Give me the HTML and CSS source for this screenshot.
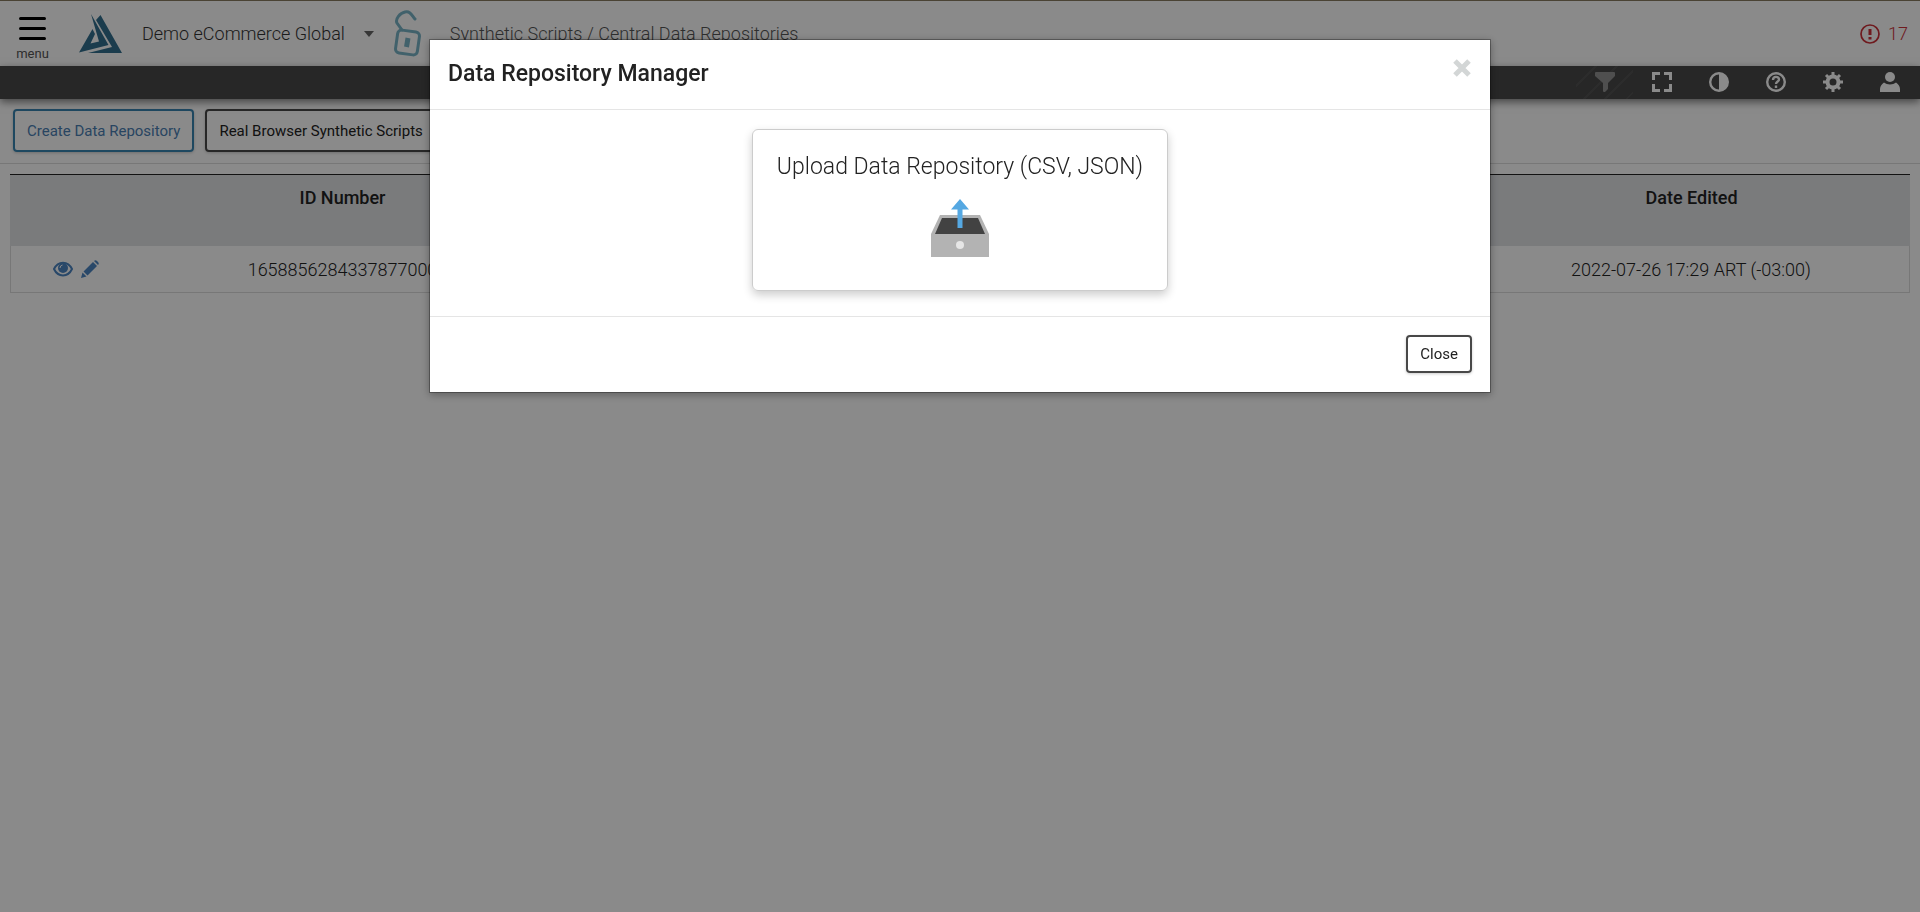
FILE: index.html
```
<!DOCTYPE html>
<html lang="en">
<head>
    <meta charset="UTF-8">
    <meta name="viewport" content="width=device-width, initial-scale=1.0">
    <title>Central Data Repositories</title>
    <link rel="stylesheet" href="styles.css">
</head>
<body>
    <header class="topbar">
        <button type="button" class="menu-btn">
            <svg width="27" height="24" viewBox="0 0 27 24"><path d="M1.500 1.500h24M1.500 11.500h24M1.500 21.500h24" stroke="#000" stroke-width="3" stroke-linecap="round"/></svg>
            <span>menu</span>
        </button>
        <a href="#" class="logo" aria-label="Home">
            <svg width="43" height="40" viewBox="0 0 43 40" fill="#33708f">
                <path d="M12 0L29.500 31 0 38.500 13.500 15 16 20 11.500 29.500 20 27.500z"/>
                <path d="M17 6L21.500 1 43 39H9L33 33z"/>
            </svg>
        </a>
        <button type="button" class="account">
            <span>Demo eCommerce Global</span>
            <i class="caret"></i>
        </button>
        <svg class="lock" width="27" height="48" viewBox="0 0 27 48" fill="none" stroke="#79b3c6" stroke-width="3" stroke-linecap="round">
            <rect x="2.500" y="21" width="22" height="23" rx="4" transform="rotate(8 13.500 32.500)"/>
            <path d="M8 20L3 13C1 9 6 3 11 2C16 1 17 4 21 9"/>
            <path d="M14 28L12.500 37" stroke-width="5" stroke-linecap="butt"/>
        </svg>
        <nav class="breadcrumb">Synthetic Scripts / Central Data Repositories</nav>
        <a href="#" class="alerts">
            <svg width="20" height="20" viewBox="0 0 20 20" fill="none" stroke="#cd3038"><circle cx="10" cy="10" r="9" stroke-width="1.700"/><path d="M10 5v6M10 13v2.500" stroke-width="3"/></svg>
            <span>17</span>
        </a>
    </header>

    <div class="actionbar">
        <button type="button" class="filter" aria-label="Filter">
            <svg width="20" height="20" viewBox="0 0 20 20" fill="#929292"><path d="M1 0h18q1 0 1 1v3l-7 7v6l-3 3H9q-1 0-1-1v-8L0 4V1q0-1 1-1z"/></svg>
        </button>
        <button type="button" aria-label="Full screen">
            <svg width="20" height="20" viewBox="0 0 20 20" fill="none" stroke="#fff" stroke-width="3"><path d="M1.500 8V1.500H8M12 1.500h6.500V8M18.500 12v6.500H12M8 18.500H1.500V12"/></svg>
        </button>
        <button type="button" aria-label="Contrast">
            <svg width="20" height="20" viewBox="0 0 20 20"><circle cx="10" cy="10" r="8.800" fill="none" stroke="#fff" stroke-width="2.400"/><path d="M10 1a9 9 0 0 1 0 18z" fill="#fff"/></svg>
        </button>
        <button type="button" aria-label="Help">
            <svg width="20" height="20" viewBox="0 0 20 20" fill="none" stroke="#fff" stroke-width="2.400"><circle cx="10" cy="10" r="8.800"/><path d="M7 8C7 3.800 13 4 13 7.500C13 9.500 10 9.500 10 12M10 13.500v2.500"/></svg>
        </button>
        <button type="button" aria-label="Settings">
            <svg width="20" height="20" viewBox="0 0 20 20" fill="none" stroke="#fff"><circle cx="10" cy="10" r="5.500" stroke-width="4"/><path d="M10 0v4M10 16v4M0 10h4M16 10h4M3 3l3 3M14 14l3 3M17 3l-3 3M6 14l-3 3" stroke-width="3"/></svg>
        </button>
        <button type="button" aria-label="User">
            <svg width="20" height="20" viewBox="0 0 20 20" fill="#fff"><circle cx="10" cy="5" r="5"/><path d="M0 20v-3c0-3 2-5 4-6.500c3 2.500 9 2.500 12 0c2 1.500 4 3.500 4 6.500v3z"/></svg>
        </button>
    </div>

    <div class="toolbar">
        <button type="button" class="btn btn-primary">Create Data Repository</button>
        <button type="button" class="btn">Real Browser Synthetic Scripts</button>
    </div>

    <main>
        <table class="repositories">
            <thead>
                <tr>
                    <th class="col-actions"></th>
                    <th class="col-id">ID Number</th>
                    <th></th>
                    <th class="col-date">Date Edited</th>
                </tr>
            </thead>
            <tbody>
                <tr>
                    <td>
                        <div class="row-actions">
                            <a href="#" aria-label="View">
                                <svg width="20" height="16" viewBox="0 0 20 16"><path d="M1 8C5-.500 15-.500 19 8C15 16.500 5 16.500 1 8z" fill="none" stroke="#4d86c2" stroke-width="2"/><circle cx="10" cy="7" r="5" fill="#4d86c2"/><path d="M7 7q0-2.500 2.500-3" stroke="#fff" fill="none"/></svg>
                            </a>
                            <a href="#" aria-label="Edit">
                                <svg width="18" height="18" viewBox="0 0 18 18" fill="#4d86c2"><path d="M0 18l1.500-5.500 4 4zM2.500 11.500L12 2l4 4-9.500 9.500zM13 1q1.500-1.500 3 0l1 1q1.500 1.500 0 3z"/></svg>
                            </a>
                        </div>
                    </td>
                    <td>1658856284337877000</td>
                    <td></td>
                    <td>2022-07-26 17:29 ART (-03:00)</td>
                </tr>
            </tbody>
        </table>
    </main>

    <div class="backdrop">
        <div class="modal" role="dialog" aria-labelledby="modalTitle">
            <div class="modal-header">
                <h2 id="modalTitle">Data Repository Manager</h2>
                <button type="button" class="modal-x" aria-label="Close dialog">
                    <svg width="18" height="18" viewBox="0 0 18 18"><path d="M2 2l14 14M16 2L2 16" stroke="#d3d6d6" stroke-width="5"/></svg>
                </button>
            </div>
            <div class="modal-body">
                <button type="button" class="upload-card">
                    <span>Upload Data Repository (CSV, JSON)</span>
                    <svg width="58" height="58" viewBox="0 0 58 58">
                        <path d="M0 35L9 16H49L58 35V58H0z" fill="#b3b3b3"/>
                        <path d="M11 19H47L54 35H4z" fill="#424242"/>
                        <circle cx="29" cy="46" r="4" fill="#e6e6e6"/>
                        <path d="M29 0L38 10.500H31.500V29H26.500V10.500H20z" fill="#55a8e2"/>
                    </svg>
                </button>
            </div>
            <div class="modal-footer">
                <button type="button" class="btn btn-close">Close</button>
            </div>
        </div>
    </div>
</body>
</html>
```
FILE: styles.css
```
* {
    box-sizing: border-box;
}

body {
    margin: 0;
    font-family: Roboto, "Liberation Sans", sans-serif;
    font-size: 18px;
    font-weight: 300;
    color: #222;
    background: #fff;
}

button {
    font: inherit;
    color: inherit;
    background: none;
    border: none;
    padding: 0;
    cursor: pointer;
}

svg {
    display: block;
}

a {
    color: inherit;
    text-decoration: none;
}

/* top header */
.topbar {
    display: flex;
    align-items: center;
    height: 66px;
    padding: 0 12px 0 16px;
    border-top: 1px solid #897c60;
}

.menu-btn {
    width: 33px;
    display: flex;
    flex-direction: column;
    align-items: center;
    gap: 6px;
    padding-top: 10px;
    font-size: 13px;
    line-height: 14px;
    font-weight: 400;
    color: #555;
}

.logo {
    margin-left: 30px;
}

.account {
    display: flex;
    align-items: center;
    gap: 19px;
    margin-left: 20px;
    color: #333;
}

.caret {
    border: 5px solid transparent;
    border-top: 6px solid #666;
    border-bottom: 0;
}

.lock {
    margin-left: 20px;
}

.breadcrumb {
    margin-left: 29px;
    color: #555;
}

.alerts {
    display: flex;
    align-items: center;
    gap: 8px;
    margin-left: auto;
    color: #cd3038;
}

/* dark icon bar */
.actionbar {
    position: relative;
    display: flex;
    justify-content: flex-end;
    align-items: center;
    height: 33px;
    padding-right: 2px;
    background: #484848;
    box-shadow: 0 3px 8px rgba(0, 0, 0, 0.5);
}

.actionbar button {
    display: flex;
    justify-content: center;
    width: 57px;
    height: 33px;
    padding-top: 6px;
}

.actionbar .filter {
    background: repeating-linear-gradient(135deg, transparent 0 13px, #525252 13px 15px);
}

/* page buttons */
.toolbar {
    display: flex;
    gap: 11px;
    padding: 10px 13px 11px;
    border-bottom: 1px solid #ddd;
}

.btn {
    height: 43px;
    padding: 0 12px;
    font-size: 15px;
    font-weight: 400;
    border: 2px solid #484848;
    border-radius: 4px;
    box-shadow: 0 1px 3px rgba(0, 0, 0, 0.2);
}

.btn-primary {
    color: #4b80b4;
    border-color: #3985b2;
}

/* table */
main {
    padding: 10px;
}

.repositories {
    width: 100%;
    table-layout: fixed;
    border-collapse: separate;
    border-spacing: 0;
    text-align: center;
}

.repositories th {
    height: 72px;
    padding: 12px 0;
    vertical-align: top;
    font-weight: 500;
    background: #e1e3e6;
    border-top: 1px solid #222;
}

.repositories td {
    height: 47px;
    padding: 0;
    border-bottom: 1px solid #ddd;
}

.repositories td:first-child {
    border-left: 1px solid #ddd;
}

.repositories td:last-child {
    border-right: 1px solid #ddd;
}

.col-actions {
    width: 7%;
}

.col-id {
    width: 21%;
}

.col-date {
    width: 23%;
}

.row-actions {
    display: flex;
    justify-content: center;
    align-items: center;
    gap: 8px;
    padding-right: 3px;
}

/* modal */
.backdrop {
    position: fixed;
    top: 0;
    left: 0;
    width: 100%;
    height: 100%;
    padding-top: 39px;
    background: rgba(0, 0, 0, 0.46);
}

.modal {
    width: 1062px;
    max-width: 100%;
    margin: 0 auto;
    background: #fff;
    background-clip: padding-box;
    border: 1px solid rgba(0, 0, 0, 0.3);
    box-shadow: 0 2px 8px rgba(0, 0, 0, 0.3);
}

.modal-header {
    display: flex;
    justify-content: space-between;
    align-items: flex-start;
    padding: 19px 19px 20px 18px;
    border-bottom: 1px solid #e5e5e5;
}

.modal-header h2 {
    margin: 0;
    font-size: 23px;
    line-height: 30px;
    font-weight: 500;
}

.modal-body {
    display: flex;
    justify-content: center;
    padding: 19px 19px 25px;
}

.upload-card {
    display: flex;
    flex-direction: column;
    align-items: center;
    gap: 16px;
    padding: 21px 24px 33px;
    font-size: 23px;
    line-height: 32px;
    border: 1px solid #ccc;
    border-radius: 6px;
    box-shadow: 0 4px 10px rgba(0, 0, 0, 0.2);
}

.modal-footer {
    display: flex;
    justify-content: flex-end;
    padding: 18px 18px 19px;
    border-top: 1px solid #e5e5e5;
}

.btn-close {
    height: 38px;
}
```
